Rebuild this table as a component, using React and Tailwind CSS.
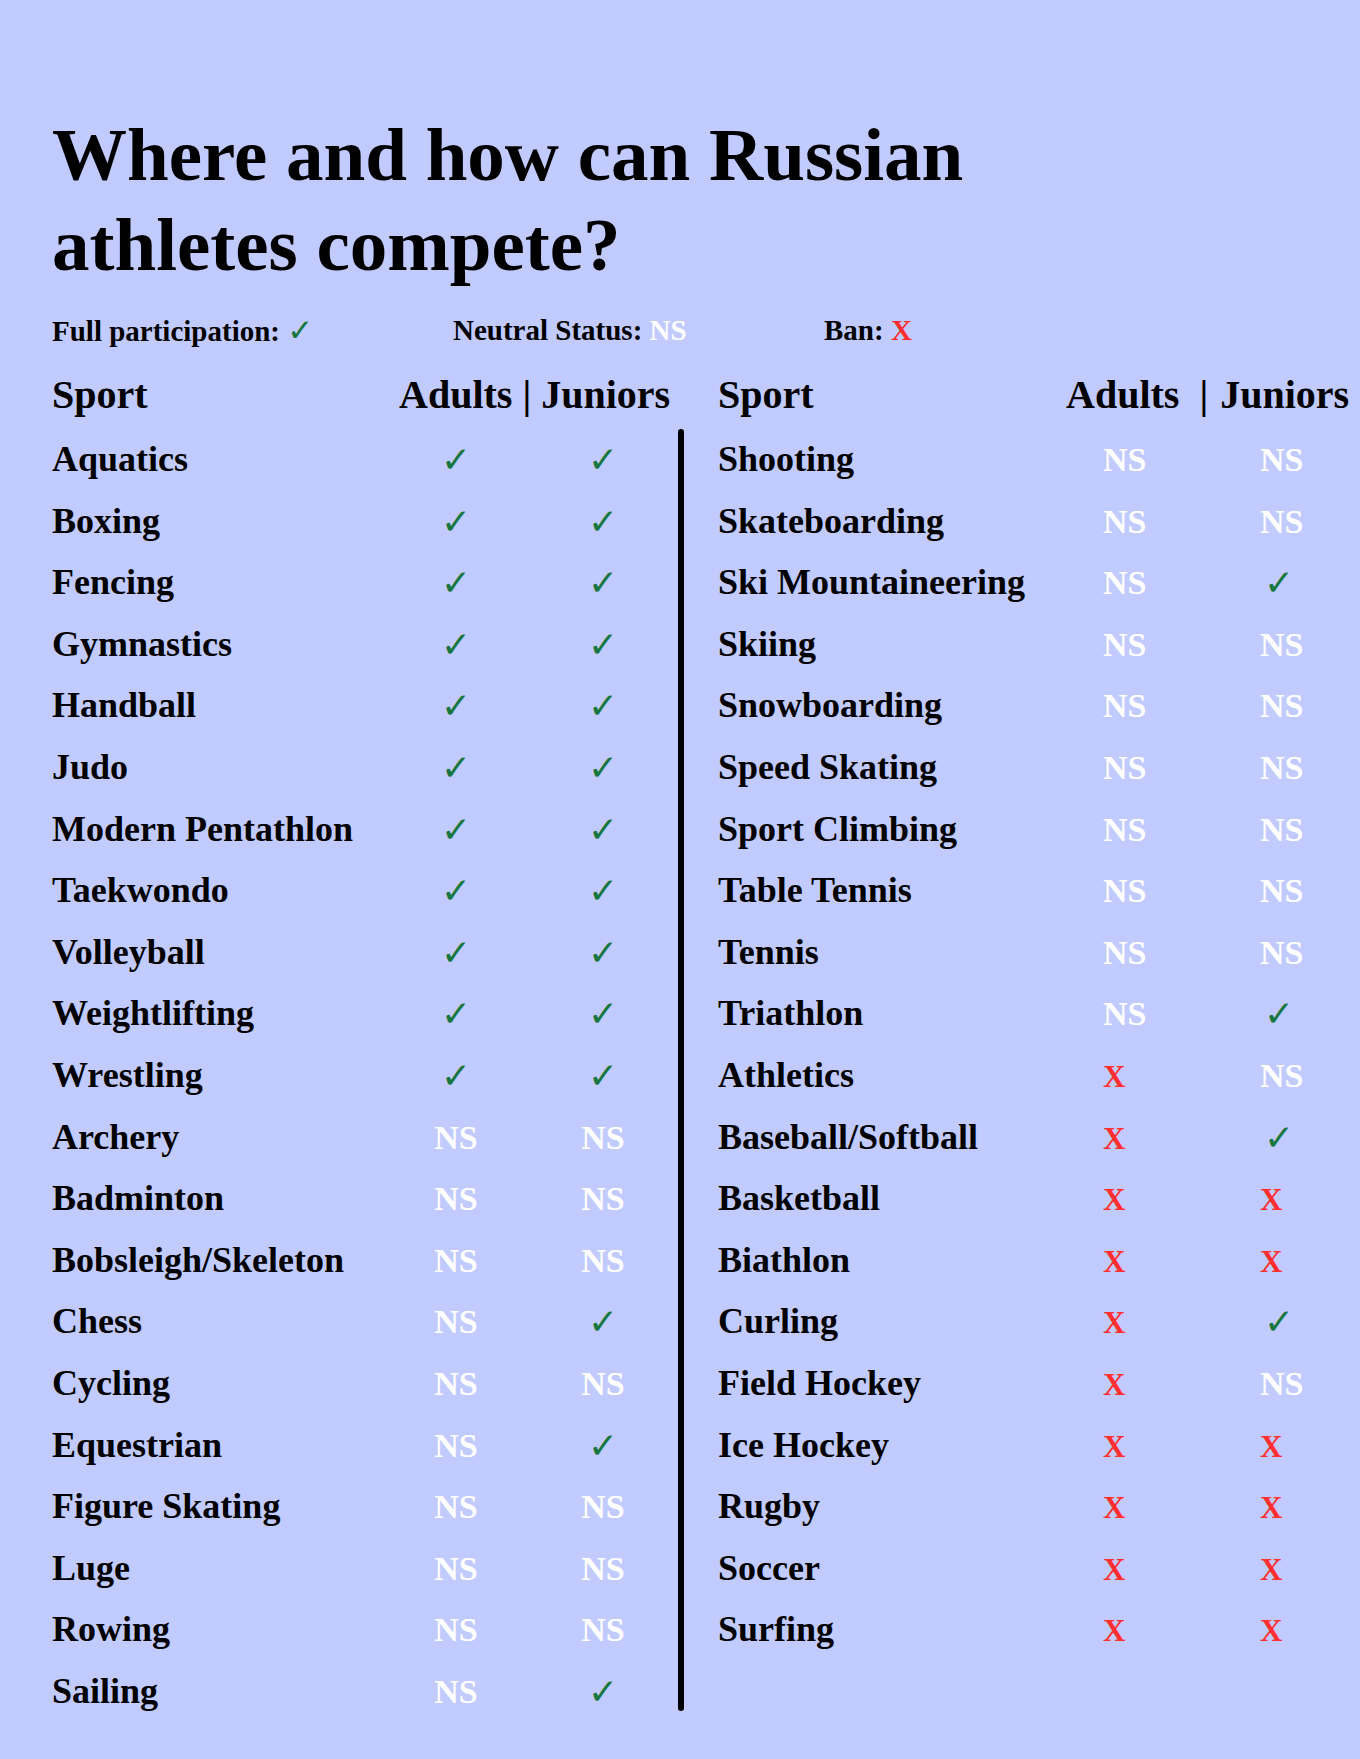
import React from 'react';

const left = [
  ['Aquatics', 'Y', 'Y'],
  ['Boxing', 'Y', 'Y'],
  ['Fencing', 'Y', 'Y'],
  ['Gymnastics', 'Y', 'Y'],
  ['Handball', 'Y', 'Y'],
  ['Judo', 'Y', 'Y'],
  ['Modern Pentathlon', 'Y', 'Y'],
  ['Taekwondo', 'Y', 'Y'],
  ['Volleyball', 'Y', 'Y'],
  ['Weightlifting', 'Y', 'Y'],
  ['Wrestling', 'Y', 'Y'],
  ['Archery', 'NS', 'NS'],
  ['Badminton', 'NS', 'NS'],
  ['Bobsleigh/Skeleton', 'NS', 'NS'],
  ['Chess', 'NS', 'Y'],
  ['Cycling', 'NS', 'NS'],
  ['Equestrian', 'NS', 'Y'],
  ['Figure Skating', 'NS', 'NS'],
  ['Luge', 'NS', 'NS'],
  ['Rowing', 'NS', 'NS'],
  ['Sailing', 'NS', 'Y'],
];

const right = [
  ['Shooting', 'NS', 'NS'],
  ['Skateboarding', 'NS', 'NS'],
  ['Ski Mountaineering', 'NS', 'Y'],
  ['Skiing', 'NS', 'NS'],
  ['Snowboarding', 'NS', 'NS'],
  ['Speed Skating', 'NS', 'NS'],
  ['Sport Climbing', 'NS', 'NS'],
  ['Table Tennis', 'NS', 'NS'],
  ['Tennis', 'NS', 'NS'],
  ['Triathlon', 'NS', 'Y'],
  ['Athletics', 'X', 'NS'],
  ['Baseball/Softball', 'X', 'Y'],
  ['Basketball', 'X', 'X'],
  ['Biathlon', 'X', 'X'],
  ['Curling', 'X', 'Y'],
  ['Field Hockey', 'X', 'NS'],
  ['Ice Hockey', 'X', 'X'],
  ['Rugby', 'X', 'X'],
  ['Soccer', 'X', 'X'],
  ['Surfing', 'X', 'X'],
];

function Mark({ v, nudge }) {
  if (v === 'Y') {
    return (
      <span className={`font-['DejaVu_Sans',sans-serif] text-[36px] font-normal text-[#17773f] ${nudge ? 'ml-[4px]' : ''}`}>
        ✓
      </span>
    );
  }
  if (v === 'X') {
    return <span className="text-[31px] text-[#ff2f2f]">X</span>;
  }
  return <span className="text-[34px] text-white">NS</span>;
}

export default function App() {
  return (
    <div className="min-h-[1759px] w-[1360px] overflow-hidden bg-[#c1cbff] pl-[52px] pt-[110px] font-['Liberation_Serif',serif] font-bold text-black">
      <h1 className="text-[75px] leading-[90px] font-bold">
        Where and how can Russian
        <br />
        athletes compete?
      </h1>

      <div className="mt-[22px] flex text-[29px] leading-[36px]">
        <div className="w-[401px]">
          Full participation:{' '}
          <span className="font-['DejaVu_Sans',sans-serif] text-[31px] font-normal text-[#17773f]">✓</span>
        </div>
        <div className="w-[371px]">
          Neutral Status: <span className="text-white">NS</span>
        </div>
        <div>
          Ban: <span className="text-[#ff2f2f]">X</span>
        </div>
      </div>

      <div className="mt-[22px] flex text-[40px] leading-[48px]">
        <div className="flex w-[626px]">
          <div className="w-[347px]">Sport</div>
          <div>Adults | Juniors</div>
        </div>
        <div className="flex pl-[40px]">
          <div className="w-[348px]">Sport</div>
          <div>Adults</div>
          <div className="ml-[20px]">|</div>
          <div className="ml-[12px]">Juniors</div>
        </div>
      </div>

      <div className="mt-[10px] flex items-start">
        <div className="w-[626px]">
          {left.map(([name, a, j]) => (
            <div key={name} className="flex h-[61.6px] text-[36px] leading-[61.6px]">
              <div className="w-[347px]">{name}</div>
              <div className="w-[114px] text-center">
                <Mark v={a} />
              </div>
              <div className="w-[150px] pl-[30px] text-center">
                <Mark v={j} />
              </div>
            </div>
          ))}
        </div>

        <div className="h-[1282px] w-[6px] rounded-full bg-black" />

        <div className="pl-[34px]">
          {right.map(([name, a, j]) => (
            <div key={name} className="flex h-[61.6px] text-[36px] leading-[61.6px]">
              <div className="w-[385px]">{name}</div>
              <div className="w-[157px]">
                <Mark v={a} />
              </div>
              <div>
                <Mark v={j} nudge={j === 'Y'} />
              </div>
            </div>
          ))}
        </div>
      </div>
    </div>
  );
}
